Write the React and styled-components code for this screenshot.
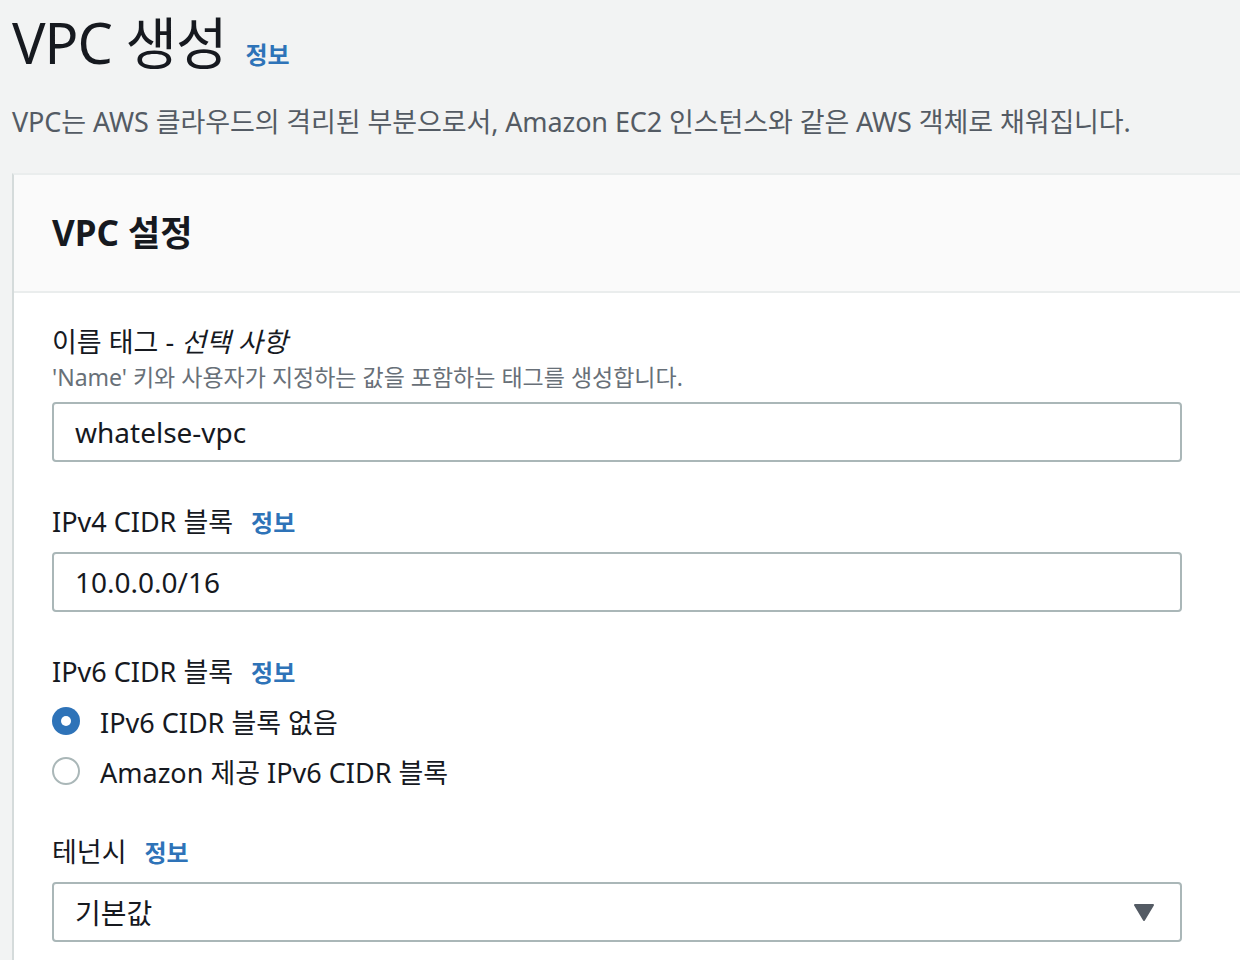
import React from "react";
import styled, { createGlobalStyle } from "styled-components";

const Global = createGlobalStyle`
  html, body { margin: 0; padding: 0; background: #f2f3f3; }
  body { font-family: "Noto Sans", "Noto Sans CJK KR", sans-serif; color: #16191f; overflow: hidden; }
  * { box-sizing: border-box; }
`;

const Page = styled.div`
  width: 1240px;
  height: 960px;
  overflow: hidden;
  padding-left: 12px;
  background: #f2f3f3;
`;

const TitleRow = styled.div`
  display: flex;
  align-items: baseline;
  gap: 19px;
  padding-top: 7px;
`;

const Title = styled.h1`
  margin: 0;
  font-size: 56px;
  font-weight: 400;
  line-height: 70px;
  letter-spacing: -1px;
  color: #16191f;
`;

const InfoLink = styled.a`
  font-size: 24px;
  font-weight: 700;
  color: #2e73b8;
  text-decoration: none;
  font-family: "Noto Sans CJK KR", "Noto Sans", sans-serif;
`;

const Description = styled.p`
  margin: 25px 0 0;
  font-size: 27px;
  line-height: 40px;
  color: #545b64;
  letter-spacing: -0.1px;
`;

const Card = styled.section`
  margin-top: 31px;
  width: 1300px;
  background: #ffffff;
  border-top: 2px solid #eaeded;
  border-left: 2px solid #d5dbdb;
`;

const CardHeader = styled.div`
  background: #fafafa;
  padding: 38px 38px;
  border-bottom: 2px solid #eaeded;
`;

const CardTitle = styled.h2`
  margin: 0;
  font-size: 35px;
  font-weight: 700;
  line-height: 40px;
  color: #16191f;
`;

const CardBody = styled.div`
  padding: 29px 38px 40px;
  display: flex;
  flex-direction: column;
  gap: 40px;
`;

const Field = styled.div`
  display: flex;
  flex-direction: column;
`;

const LabelRow = styled.div`
  display: flex;
  align-items: baseline;
  gap: 18px;
  margin-bottom: ${(p) => p.$gap ?? 10}px;
`;

const Label = styled.label`
  font-size: 27px;
  line-height: 40px;
  color: #16191f;
  em { font-style: italic; }
`;

const Hint = styled.div`
  font-size: 23px;
  line-height: 31px;
  color: #687078;
  margin-bottom: 9px;
`;

const Input = styled.div`
  width: 1130px;
  height: 60px;
  border: 2px solid #aab7b8;
  border-radius: 4px;
  background: #fff;
  display: flex;
  align-items: center;
  justify-content: space-between;
  padding: 0 26px 0 21px;
  font-size: 28px;
  color: #16191f;
`;

const Caret = styled.svg`
  width: 20px;
  height: 17px;
  display: block;
`;

const RadioGroup = styled.div`
  display: flex;
  flex-direction: column;
  gap: 10px;
  padding-bottom: 1px;
`;

const RadioRow = styled.div`
  display: flex;
  align-items: center;
  gap: 20px;
  height: 40px;
  font-size: 27px;
  color: #16191f;
`;

const RadioDot = styled.span`
  width: 28px;
  height: 28px;
  border-radius: 50%;
  flex: none;
  background: ${(p) => (p.$checked ? "#2e73b8" : "#fff")};
  border: ${(p) => (p.$checked ? "none" : "2px solid #aab7b8")};
  display: flex;
  align-items: center;
  justify-content: center;
  &::after {
    content: "";
    display: ${(p) => (p.$checked ? "block" : "none")};
    width: 10px;
    height: 10px;
    border-radius: 50%;
    background: #fff;
  }
`;

export default function App() {
  return (
    <Page>
      <Global />
      <TitleRow>
        <Title>VPC 생성</Title>
        <InfoLink href="#">정보</InfoLink>
      </TitleRow>
      <Description>
        VPC는 AWS 클라우드의 격리된 부분으로서, Amazon EC2 인스턴스와 같은 AWS 객체로 채워집니다.
      </Description>
      <Card>
        <CardHeader>
          <CardTitle>VPC 설정</CardTitle>
        </CardHeader>
        <CardBody>
          <Field>
            <LabelRow $gap={0}>
              <Label>
                이름 태그 - <em>선택 사항</em>
              </Label>
            </LabelRow>
            <Hint>'Name' 키와 사용자가 지정하는 값을 포함하는 태그를 생성합니다.</Hint>
            <Input>whatelse-vpc</Input>
          </Field>
          <Field>
            <LabelRow>
              <Label>IPv4 CIDR 블록</Label>
              <InfoLink href="#">정보</InfoLink>
            </LabelRow>
            <Input>10.0.0.0/16</Input>
          </Field>
          <Field>
            <LabelRow $gap={9}>
              <Label>IPv6 CIDR 블록</Label>
              <InfoLink href="#">정보</InfoLink>
            </LabelRow>
            <RadioGroup>
              <RadioRow>
                <RadioDot $checked />
                IPv6 CIDR 블록 없음
              </RadioRow>
              <RadioRow>
                <RadioDot />
                Amazon 제공 IPv6 CIDR 블록
              </RadioRow>
            </RadioGroup>
          </Field>
          <Field>
            <LabelRow>
              <Label>테넌시</Label>
              <InfoLink href="#">정보</InfoLink>
            </LabelRow>
            <Input>
              기본값
              <Caret viewBox="0 0 20 17">
                <path d="M1 1 L19 1 L10 16 Z" fill="#545b64" stroke="#545b64" strokeWidth="2" strokeLinejoin="round" />
              </Caret>
            </Input>
          </Field>
        </CardBody>
      </Card>
    </Page>
  );
}
